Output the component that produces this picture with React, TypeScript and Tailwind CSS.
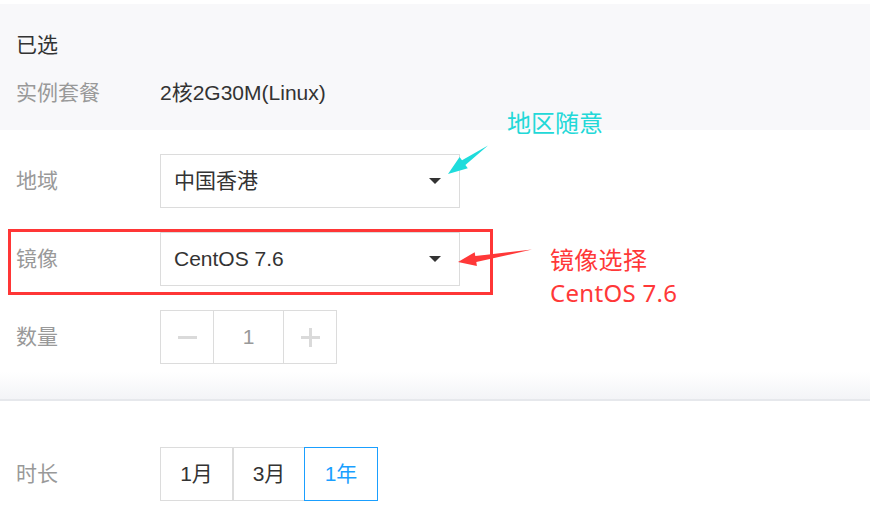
import React from "react";

const Caret = () => (
  <svg width="12" height="6" viewBox="0 0 12 6" className="block">
    <polygon points="0,0 12,0 6,6" fill="#333" />
  </svg>
);

export default function App() {
  const font = { fontFamily: '"Liberation Sans", "Noto Sans CJK SC", sans-serif' };
  return (
    <div
      className="relative w-[870px] h-[508px] overflow-hidden bg-white text-[21px] text-[#333]"
      style={font}
    >
      <div className="pt-[4px]">
        {/* selected summary */}
        <div className="h-[126px] bg-[#f8f8fa] px-[16px] pt-[24px] flex flex-col gap-[14px]">
          <div className="h-[34px] flex items-center">已选</div>
          <div className="h-[34px] flex items-center">
            <span className="w-[144px] text-[#999]">实例套餐</span>
            <span>2核2G30M(Linux)</span>
          </div>
        </div>

        {/* form */}
        <div className="px-[16px] pt-[24px] flex flex-col gap-[24px]">
          <div className="flex items-center h-[54px]">
            <span className="w-[144px] text-[#999]">地域</span>
            <div className="w-[300px] h-[54px] border border-[#dcdcdc] flex items-center justify-between pl-[13px] pr-[18px]">
              <span>中国香港</span>
              <Caret />
            </div>
          </div>
          <div className="flex items-center h-[54px]">
            <span className="w-[144px] text-[#999]">镜像</span>
            <div className="w-[300px] h-[54px] border border-[#dcdcdc] flex items-center justify-between pl-[13px] pr-[18px]">
              <span>CentOS 7.6</span>
              <Caret />
            </div>
          </div>
          <div className="flex items-center h-[54px]">
            <span className="w-[144px] text-[#999]">数量</span>
            <div className="h-[54px] w-[177px] border border-[#dcdcdc] flex">
              <div className="w-[52px] flex items-center justify-center">
                <div className="w-[19px] h-[3px] bg-[#dadada]" />
              </div>
              <div className="w-[71px] border-l border-r border-[#dcdcdc] flex items-center justify-center text-[#999]">
                1
              </div>
              <div className="flex-1 flex items-center justify-center">
                <div className="relative w-[19px] h-[19px]">
                  <div className="absolute left-0 top-[8px] w-[19px] h-[3px] bg-[#dadada]" />
                  <div className="absolute top-0 left-[8px] w-[3px] h-[19px] bg-[#dadada]" />
                </div>
              </div>
            </div>
          </div>
        </div>

        {/* divider band */}
        <div className="mt-[8px] h-[29px] bg-gradient-to-b from-white to-[#f3f4f7] border-b-2 border-[#e6e8ec]" />

        {/* duration */}
        <div className="px-[16px] pt-[46px] flex items-center">
          <span className="w-[144px] text-[#999]">时长</span>
          <div className="flex h-[54px]">
            <div className="w-[73px] border border-[#dcdcdc] flex items-center justify-center">1月</div>
            <div className="w-[71px] border-t border-b border-l border-[#dcdcdc] flex items-center justify-center">3月</div>
            <div className="w-[74px] border border-[#1a9fff] text-[#1a9fff] flex items-center justify-center">1年</div>
          </div>
        </div>
      </div>

      {/* annotations */}
      <div className="absolute left-[8px] top-[229px] w-[485px] h-[66px] border-[3px] border-[#ff3636]" />
      <svg className="absolute left-0 top-0" width="870" height="508">
        <polygon
          points="448,174 467.8,168.3 465.4,165 488,145.5 462,160.2 459.6,156.9"
          fill="#1fdcdc"
        />
        <polygon
          points="458,262 476.9,266 476.3,262.1 532,249.5 475.3,256.1 474.7,252.2"
          fill="#ff3838"
        />
      </svg>
      <div
        className="absolute left-[507px] top-[108px] text-[24px] leading-[30px] text-[#22d8d8]"
        style={{ fontFamily: '"Noto Sans", "Noto Sans CJK SC", sans-serif' }}
      >
        地区随意
      </div>
      <div
        className="absolute left-[550px] top-[243px] text-[24px] leading-[33px] text-[#ff3838] tracking-[0.3px]"
        style={{ fontFamily: '"Noto Sans", "Noto Sans CJK SC", sans-serif' }}
      >
        <div>镜像选择</div>
        <div>CentOS 7.6</div>
      </div>
    </div>
  );
}
